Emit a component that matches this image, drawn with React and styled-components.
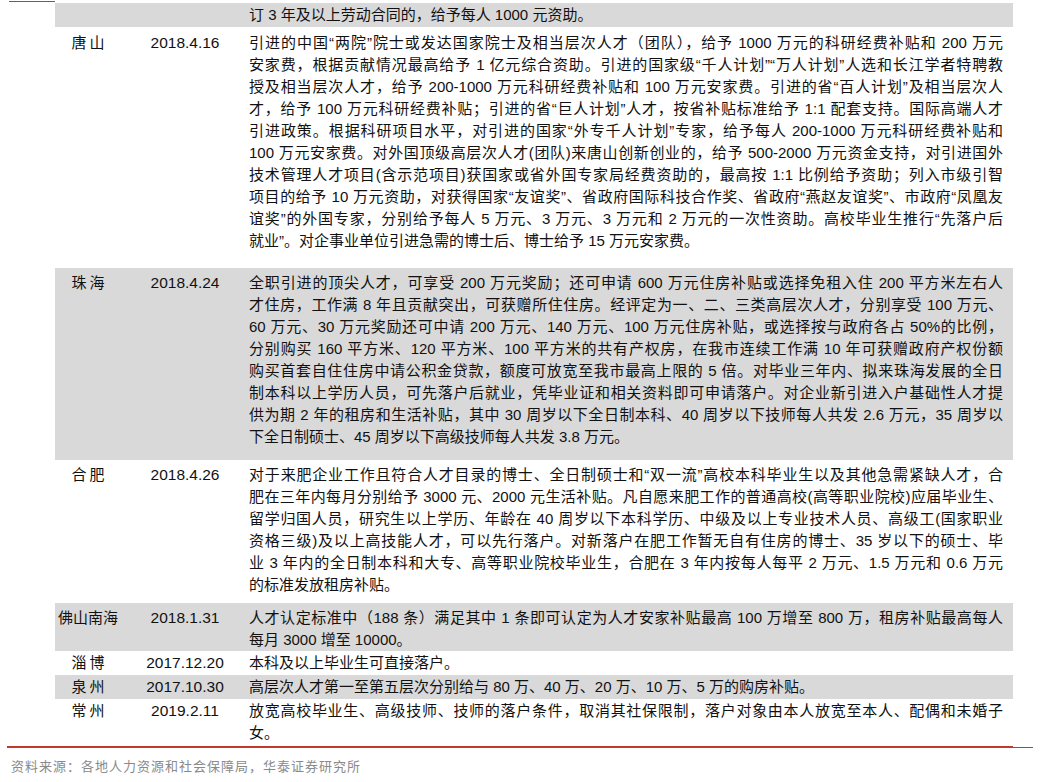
import React from 'react';
import styled, { createGlobalStyle } from 'styled-components';

const GlobalStyle = createGlobalStyle`
  body {
    margin: 0;
    background: #fff;
    color: #111;
    font-family: "Liberation Sans", "Noto Sans CJK SC", sans-serif;
  }
`

const Page = styled.div`
  width: 1043px;
  padding-top: 1px;
`

const TopRule = styled.div`
  margin-left: 9px;
  width: 46px;
  height: 1px;
  background: #c23a2b;
`

const Table = styled.div`
  margin: 1px 0 0 55px;
  width: 958px;
`

const Row = styled.div`
  display: grid;
  grid-template-columns: 66px 128px 1fr;
  background: ${p => p.$shade ? '#d9d9d9' : 'transparent'};
  padding: ${p => p.$pt}px 10px ${p => p.$pb}px 0;
  font-size: 15px;
  line-height: 22px;
`

const City = styled.div`
  text-align: center;
  letter-spacing: ${p => p.$wide ? '3px' : '0'};
  text-indent: ${p => p.$wide ? '3px' : '0'};
`

const DateCell = styled.div`
  text-align: center;
  font-size: 15.5px;
`

const Body = styled.div`
  min-width: 0;
`

const Line = styled.div`
  text-align: justify;
  text-align-last: ${p => p.$last ? 'left' : 'justify'};
`

const BottomRule = styled.div`
  display: flex;
  align-items: center;
  margin: 1px 0 0 7px;
`

const Thick = styled.div`
  width: 1006px;
  height: 2px;
  background: #c23a2b;
`

const Thin = styled.div`
  width: 20px;
  height: 1px;
  background: #c23a2b;
`

const Source = styled.div`
  margin: 10px 0 0 11px;
  font-size: 13px;
  line-height: 18px;
  letter-spacing: 1px;
  color: #8a8a8a;
`

const rows = [
  {
    city: '', date: '', shade: true, pt: 1, pb: 1,
    lines: ['订 3 年及以上劳动合同的，给予每人 1000 元资助。'],
  },
  {
    city: '唐山', date: '2018.4.16', shade: false, pt: 5, pb: 16,
    lines: [
      '引进的中国“两院”院士或发达国家院士及相当层次人才（团队），给予 1000 万元的科研经费补贴和 200 万元',
      '安家费，根据贡献情况最高给予 1 亿元综合资助。引进的国家级“千人计划”“万人计划”人选和长江学者特聘教',
      '授及相当层次人才，给予 200-1000 万元科研经费补贴和 100 万元安家费。引进的省“百人计划”及相当层次人',
      '才，给予 100 万元科研经费补贴；引进的省“巨人计划”人才，按省补贴标准给予 1:1 配套支持。国际高端人才',
      '引进政策。根据科研项目水平，对引进的国家“外专千人计划”专家，给予每人 200-1000 万元科研经费补贴和',
      '100 万元安家费。对外国顶级高层次人才(团队)来唐山创新创业的，给予 500-2000 万元资金支持，对引进国外',
      '技术管理人才项目(含示范项目)获国家或省外国专家局经费资助的，最高按 1:1 比例给予资助；列入市级引智',
      '项目的给予 10 万元资助，对获得国家“友谊奖”、省政府国际科技合作奖、省政府“燕赵友谊奖”、市政府“凤凰友',
      '谊奖”的外国专家，分别给予每人 5 万元、3 万元、3 万元和 2 万元的一次性资助。高校毕业生推行“先落户后',
      '就业”。对企事业单位引进急需的博士后、博士给予 15 万元安家费。',
    ],
  },
  {
    city: '珠海', date: '2018.4.24', shade: true, pt: 4, pb: 12,
    lines: [
      '全职引进的顶尖人才，可享受 200 万元奖励；还可申请 600 万元住房补贴或选择免租入住 200 平方米左右人',
      '才住房，工作满 8 年且贡献突出，可获赠所住住房。经评定为一、二、三类高层次人才，分别享受 100 万元、',
      '60 万元、30 万元奖励还可中请 200 万元、140 万元、100 万元住房补贴，或选择按与政府各占 50%的比例，',
      '分别购买 160 平方米、120 平方米、100 平方米的共有产权房，在我市连续工作满 10 年可获赠政府产权份额',
      '购买首套自住住房中请公积金贷款，额度可放宽至我市最高上限的 5 倍。对毕业三年内、拟来珠海发展的全日',
      '制本科以上学历人员，可先落户后就业，凭毕业证和相关资料即可申请落户。对企业新引进入户基础性人才提',
      '供为期 2 年的租房和生活补贴，其中 30 周岁以下全日制本科、40 周岁以下技师每人共发 2.6 万元，35 周岁以',
      '下全日制硕士、45 周岁以下高级技师每人共发 3.8 万元。',
    ],
  },
  {
    city: '合肥', date: '2018.4.26', shade: false, pt: 4, pb: 7,
    lines: [
      '对于来肥企业工作且符合人才目录的博士、全日制硕士和“双一流”高校本科毕业生以及其他急需紧缺人才，合',
      '肥在三年内每月分别给予 3000 元、2000 元生活补贴。凡自愿来肥工作的普通高校(高等职业院校)应届毕业生、',
      '留学归国人员，研究生以上学历、年龄在 40 周岁以下本科学历、中级及以上专业技术人员、高级工(国家职业',
      '资格三级)及以上高技能人才，可以先行落户。对新落户在肥工作暂无自有住房的博士、35 岁以下的硕士、毕',
      '业 3 年内的全日制本科和大专、高等职业院校毕业生，合肥在 3 年内按每人每平 2 万元、1.5 万元和 0.6 万元',
      '的标准发放租房补贴。',
    ],
  },
  {
    city: '佛山南海', date: '2018.1.31', shade: true, pt: 4, pb: 0,
    lines: [
      '人才认定标准中（188 条）满足其中 1 条即可认定为人才安家补贴最高 100 万增至 800 万，租房补贴最高每人',
      '每月 3000 增至 10000。',
    ],
  },
  {
    city: '淄博', date: '2017.12.20', shade: false, pt: 1, pb: 1,
    lines: ['本科及以上毕业生可直接落户。'],
  },
  {
    city: '泉州', date: '2017.10.30', shade: true, pt: 1, pb: 1,
    lines: ['高层次人才第一至第五层次分别给与 80 万、40 万、20 万、10 万、5 万的购房补贴。'],
  },
  {
    city: '常州', date: '2019.2.11', shade: false, pt: 1, pb: 1,
    lines: [
      '放宽高校毕业生、高级技师、技师的落户条件，取消其社保限制，落户对象由本人放宽至本人、配偶和未婚子',
      '女。',
    ],
  },
]

export default function App() {
  return (
    <Page>
      <GlobalStyle />
      <TopRule />
      <Table>
        {rows.map((row, i) => (
          <Row key={'row' + i} $shade={row.shade} $pt={row.pt} $pb={row.pb}>
            <City $wide={row.city.length === 2}>{row.city}</City>
            <DateCell>{row.date}</DateCell>
            <Body>
              {row.lines.map((line, j) => (
                <Line key={j} $last={j === row.lines.length - 1}>{line}</Line>
              ))}
            </Body>
          </Row>
        ))}
      </Table>
      <BottomRule>
        <Thick />
        <Thin />
      </BottomRule>
      <Source>资料来源：各地人力资源和社会保障局，华泰证券研究所</Source>
    </Page>
  );
}
